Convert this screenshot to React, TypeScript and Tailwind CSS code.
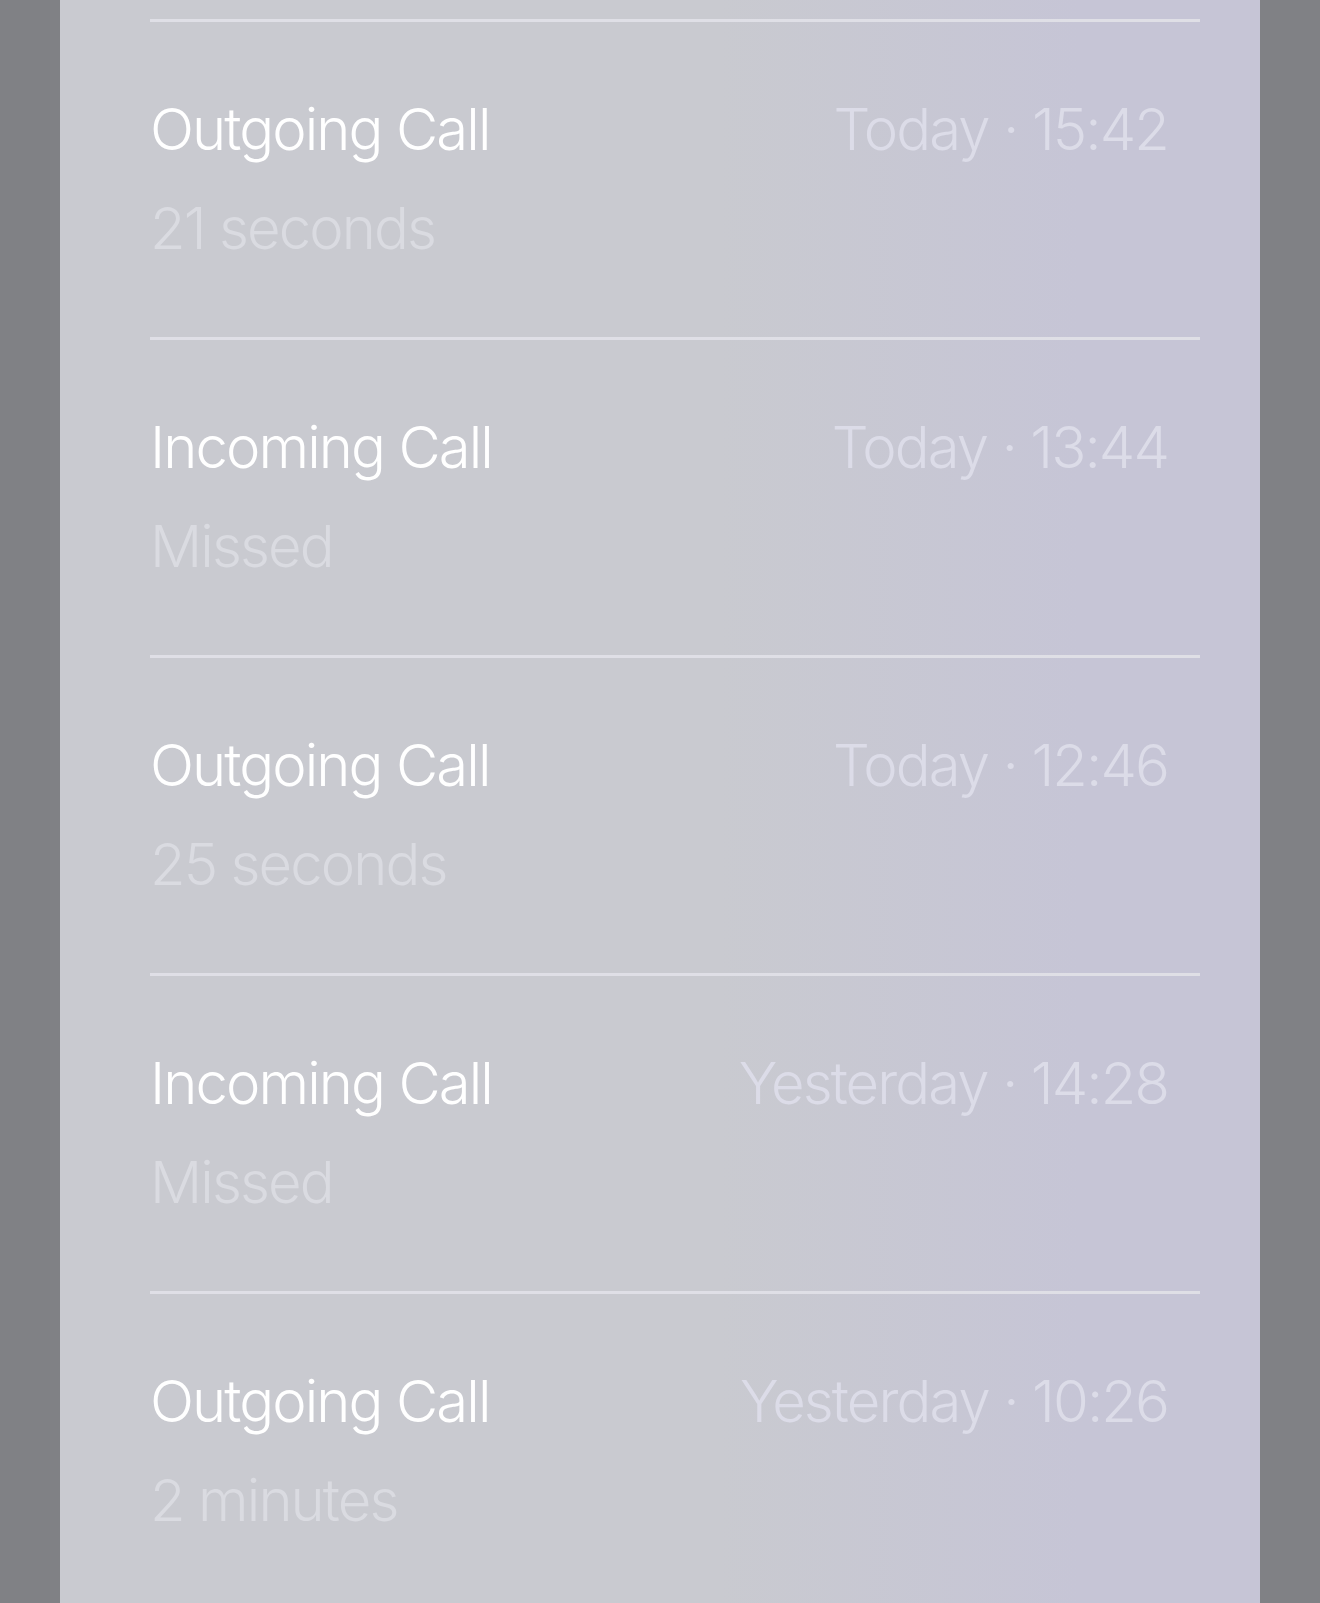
import React from 'react';

interface CallEntry {
    kind: string;
    when: string;
    detail: string;
}

const calls: CallEntry[] = [
    { kind: 'Outgoing Call', when: 'Today · 15:42', detail: '21 seconds' },
    { kind: 'Incoming Call', when: 'Today · 13:44', detail: 'Missed' },
    { kind: 'Outgoing Call', when: 'Today · 12:46', detail: '25 seconds' },
    { kind: 'Incoming Call', when: 'Yesterday · 14:28', detail: 'Missed' },
    { kind: 'Outgoing Call', when: 'Yesterday · 10:26', detail: '2 minutes' },
];

const CallRow: React.FC<{ call: CallEntry }> = ({ call }) => (
    <div className="border-t-[3px] border-[#dfdfe6] pt-[58px] pb-[59px] pr-[32px]">
        <div className="flex items-center justify-between leading-[99px]">
            <span className="text-white">{call.kind}</span>
            <span className="text-[#dcdce8]">{call.when}</span>
        </div>
        <div className="leading-[99px] text-[#dadbe1]">{call.detail}</div>
    </div>
);

const App: React.FC = () => {
    return (
        <div className="flex h-[1603px] w-[1320px] overflow-hidden bg-[#808185] px-[60px]">
            <div
                className="flex-1 bg-[linear-gradient(90deg,#c9cad0_0%,#c9cad0_55%,#c6c5d6_85%,#c6c5d6_100%)] pl-[90px] pr-[60px] pt-[19px] text-[58px] font-[360] tracking-[-0.033em]"
                style={{ fontFamily: 'Inter, "Noto Sans", sans-serif' }}
            >
                {calls.map((call, i) => (
                    <CallRow key={i} call={call} />
                ))}
            </div>
        </div>
    );
};

export default App;
